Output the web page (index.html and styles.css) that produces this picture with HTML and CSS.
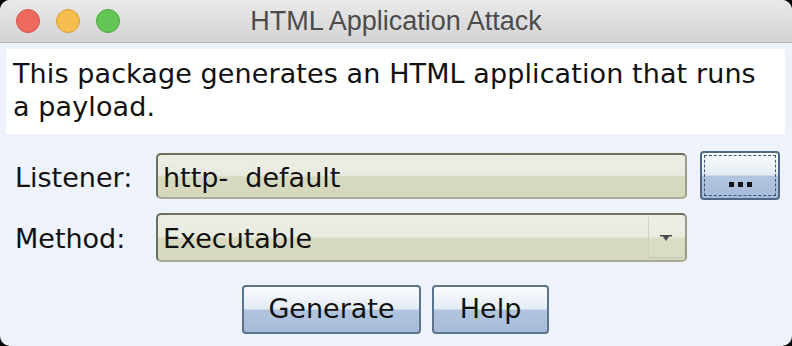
FILE: index.html
```html
<!DOCTYPE html>
<html>
<head>
<meta charset="utf-8">
<link rel="stylesheet" href="styles.css">
</head>
<body>
<div class="window">
  <div class="titlebar">
    <div class="lights">
      <span class="light red"></span>
      <span class="light yellow"></span>
      <span class="light green"></span>
    </div>
    <div class="title">HTML Application Attack</div>
  </div>
  <div class="content">
    <div class="desc">This package generates an HTML application that runs a payload.</div>
    <div class="form">
      <div class="label">Listener:</div>
      <div class="field"><span class="ftext">http-&nbsp; default</span></div>
      <button class="btn dots focused"><span class="dot"></span><span class="dot"></span><span class="dot"></span></button>
      <div class="label">Method:</div>
      <div class="field combo"><span class="ftext">Executable</span><span class="arrowbox"><svg width="12" height="6" viewBox="0 0 12 6"><path d="M0 0h12v1.5H9L6 6 3 1.5H0z" fill="#4a4a4a"/></svg></span></div>
    </div>
    <div class="actions">
      <button class="btn act gen">Generate</button>
      <button class="btn act help">Help</button>
    </div>
  </div>
</div>
</body>
</html>
```
FILE: styles.css
```css
html, body {
  margin: 0;
  padding: 0;
  background: #000;
  width: 792px;
  height: 346px;
  overflow: hidden;
}
.window {
  width: 792px;
  height: 346px;
  background: #eef2fa;
  border-radius: 10px;
  overflow: hidden;
  display: flex;
  flex-direction: column;
  font-family: "DejaVu Sans", sans-serif;
}
.titlebar {
  height: 42px;
  flex: 0 0 42px;
  background: linear-gradient(#e9e9e9, #d3d3d3);
  border-bottom: 1px solid #b2b2b2;
  position: relative;
  display: flex;
  align-items: center;
  justify-content: center;
}
.lights {
  position: absolute;
  left: 16px;
  top: 9px;
  display: flex;
  gap: 16px;
}
.light {
  width: 24px;
  height: 24px;
  border-radius: 50%;
  box-sizing: border-box;
}
.red { background: #ee6a5f; border: 1px solid #d5534a; }
.yellow { background: #f5be4f; border: 1px solid #d9a13a; }
.green { background: #62c555; border: 1px solid #4ea843; }
.title {
  font-family: "Liberation Sans", "Helvetica", sans-serif;
  font-size: 27px;
  color: #4c4c4c;
  margin-top: 1px;
}
.content {
  flex: 1;
  padding: 6px 7px 0 6px;
  display: flex;
  flex-direction: column;
}
.desc {
  background: #fff;
  height: 85px;
  box-sizing: border-box;
  padding: 8px 25px 0 7px;
  font-size: 27px;
  line-height: 33px;
  letter-spacing: 0.1px;
  color: #111;
}
.form {
  display: grid;
  grid-template-columns: 150px 531px 93px;
  grid-template-rows: 46px 49px;
  row-gap: 14px;
  margin-top: 19px;
  align-items: center;
}
.label {
  font-size: 27px;
  color: #111;
  padding-left: 9px;
  padding-top: 2px;
}
.field {
  height: 46px;
  box-sizing: border-box;
  border: 2px solid #6d6f5e;
  border-right-color: #9a9c88;
  border-bottom-color: #a9ab96;
  border-radius: 5px;
  background: linear-gradient(#eceee3 0%, #e9ebdf 48%, #d7dabf 52%, #d5d8bd 100%);
  display: flex;
  align-items: center;
  padding-left: 5px;
  padding-top: 2px;
  font-size: 27px;
  color: #111;
}
.combo {
  height: 49px;
  position: relative;
}
.arrowbox {
  position: absolute;
  right: 2px;
  top: 2px;
  bottom: 2px;
  width: 34px;
  border-left: 1px solid #cfd1bd;
  background: linear-gradient(#edeee5 0%, #eaebe0 48%, #dcdec8 52%, #d9dcc4 100%);
  box-shadow: inset 0 -1px 0 #c9cbb5;
  display: flex;
  align-items: center;
  justify-content: center;
}
.btn {
  box-sizing: border-box;
  border: 2px solid #5b7490;
  border-radius: 4px;
  background: linear-gradient(#fbfcfd 0%, #e3ebf4 48%, #b2c5df 52%, #a6bbd9 100%);
  font-family: "DejaVu Sans", sans-serif;
  font-size: 27px;
  color: #111;
  padding: 0;
  display: flex;
  align-items: center;
  justify-content: center;
}
.dots {
  width: 80px;
  height: 49px;
  margin-left: 13px;
  margin-top: -2px;
  gap: 4px;
  padding-top: 18px;
  border-color: #4f6886;
  outline: 1px dashed #3f5775;
  outline-offset: -5px;
}
.dot {
  width: 5px;
  height: 5px;
  background: #111;
}
.actions {
  display: flex;
  justify-content: center;
  gap: 11px;
  margin-top: 23px;
}
.act {
  height: 49px;
  padding-bottom: 2px;
}
.gen { width: 179px; }
.help { width: 117px; }
```
